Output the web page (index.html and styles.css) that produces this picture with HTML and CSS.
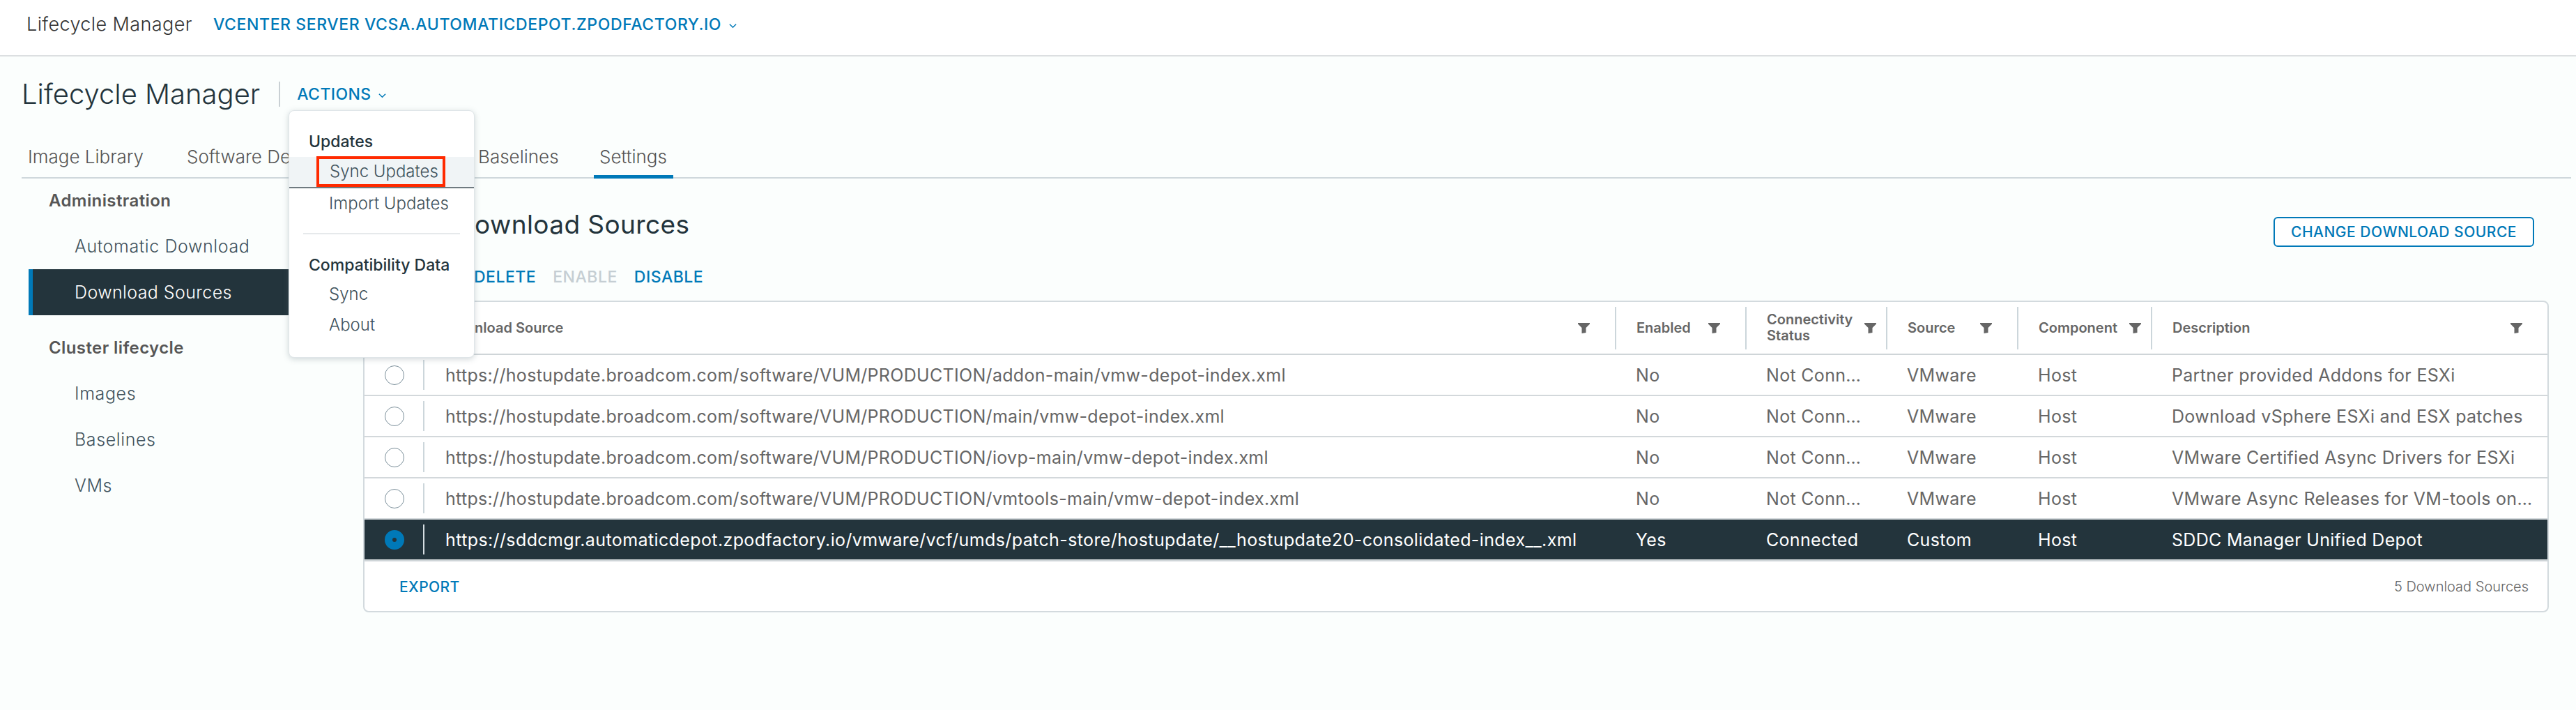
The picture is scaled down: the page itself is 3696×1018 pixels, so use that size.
FILE: index.html
```html
<!doctype html>
<html>
<head>
<meta charset="UTF-8" />
<title>Lifecycle Manager</title>
<link rel="stylesheet" href="styles.css">
</head>
<body>
	<header class="app-header">
		<span class="app-name">Lifecycle Manager</span>
		<a class="context-link">VCENTER SERVER VCSA.AUTOMATICDEPOT.ZPODFACTORY.IO
			<svg class="caret" viewBox="0 0 12 8"><path d="M1 1.5L6 6.5L11 1.5" /></svg>
		</a>
	</header>

	<div class="title-bar">
		<h1 class="page-title">Lifecycle Manager</h1>
		<a class="actions-link">ACTIONS
			<svg class="caret" viewBox="0 0 12 8"><path d="M1 1.5L6 6.5L11 1.5" /></svg>
		</a>
	</div>

	<nav class="tabs">
		<a class="tab tab-library">Image Library</a>
		<a class="tab tab-depot">Software Depot</a>
		<a class="tab tab-baselines">Baselines</a>
		<a class="tab tab-active">Settings</a>
	</nav>

	<div class="dropdown">
		<div class="dropdown-head">Updates</div>
		<div class="dropdown-item item-focus"><span class="red-box">Sync Updates</span></div>
		<div class="dropdown-item">Import Updates</div>
		<div class="dropdown-divider"></div>
		<div class="dropdown-head">Compatibility Data</div>
		<div class="dropdown-item">Sync</div>
		<div class="dropdown-item">About</div>
	</div>

	<div class="content">
		<aside class="sidebar">
			<div class="side-title">Administration</div>
			<a class="side-link">Automatic Download</a>
			<a class="side-link side-active">Download Sources</a>
			<div class="side-title side-title-2">Cluster lifecycle</div>
			<a class="side-link">Images</a>
			<a class="side-link">Baselines</a>
			<a class="side-link">VMs</a>
		</aside>

		<main class="main">
			<div class="main-head">
				<h2 class="main-title">Download Sources</h2>
				<button class="outline-btn">CHANGE DOWNLOAD SOURCE</button>
			</div>
			<div class="grid-actions">
				<a class="grid-action">DELETE</a>
				<a class="grid-action action-off">ENABLE</a>
				<a class="grid-action">DISABLE</a>
			</div>

			<div class="datagrid">
				<table class="grid-table">
					<colgroup>
						<col class="col-radio"><col class="col-url"><col class="col-enabled"><col class="col-conn"><col class="col-source"><col class="col-comp"><col>
					</colgroup>
					<thead>
						<tr>
							<th></th>
							<th><div class="th-box th-first"><span>Download Source</span><svg class="funnel" viewBox="0 0 17 15"><path d="M0 0H17V1.500L11.500 7V14L5.500 15V7L0 1.500Z" /></svg></div></th>
							<th><div class="th-box"><span>Enabled</span><svg class="funnel" viewBox="0 0 17 15"><path d="M0 0H17V1.500L11.500 7V14L5.500 15V7L0 1.500Z" /></svg></div></th>
							<th><div class="th-box th-tight"><span>Connectivity<br>Status</span><svg class="funnel" viewBox="0 0 17 15"><path d="M0 0H17V1.500L11.500 7V14L5.500 15V7L0 1.500Z" /></svg></div></th>
							<th><div class="th-box"><span>Source</span><svg class="funnel" viewBox="0 0 17 15"><path d="M0 0H17V1.500L11.500 7V14L5.500 15V7L0 1.500Z" /></svg></div></th>
							<th><div class="th-box th-tight"><span>Component</span><svg class="funnel" viewBox="0 0 17 15"><path d="M0 0H17V1.500L11.500 7V14L5.500 15V7L0 1.500Z" /></svg></div></th>
							<th><div class="th-box"><span>Description</span><svg class="funnel" viewBox="0 0 17 15"><path d="M0 0H17V1.500L11.500 7V14L5.500 15V7L0 1.500Z" /></svg></div></th>
						</tr>
					</thead>
					<tbody>
						<tr>
							<td class="radio-cell"><div class="radio-box"><i class="radio"></i></div></td>
							<td>https://hostupdate.broadcom.com/software/VUM/PRODUCTION/addon-main/vmw-depot-index.xml</td>
							<td>No</td><td>Not Conn…</td><td>VMware</td><td>Host</td><td>Partner provided Addons for ESXi</td>
						</tr>
						<tr>
							<td class="radio-cell"><div class="radio-box"><i class="radio"></i></div></td>
							<td>https://hostupdate.broadcom.com/software/VUM/PRODUCTION/main/vmw-depot-index.xml</td>
							<td>No</td><td>Not Conn…</td><td>VMware</td><td>Host</td><td>Download vSphere ESXi and ESX patches</td>
						</tr>
						<tr>
							<td class="radio-cell"><div class="radio-box"><i class="radio"></i></div></td>
							<td>https://hostupdate.broadcom.com/software/VUM/PRODUCTION/iovp-main/vmw-depot-index.xml</td>
							<td>No</td><td>Not Conn…</td><td>VMware</td><td>Host</td><td>VMware Certified Async Drivers for ESXi</td>
						</tr>
						<tr>
							<td class="radio-cell"><div class="radio-box"><i class="radio"></i></div></td>
							<td>https://hostupdate.broadcom.com/software/VUM/PRODUCTION/vmtools-main/vmw-depot-index.xml</td>
							<td>No</td><td>Not Conn…</td><td>VMware</td><td>Host</td><td>VMware Async Releases for VM-tools on…</td>
						</tr>
						<tr class="row-selected">
							<td class="radio-cell"><div class="radio-box"><i class="radio radio-on"></i></div></td>
							<td class="url-long">https://sddcmgr.automaticdepot.zpodfactory.io/vmware/vcf/umds/patch-store/hostupdate/__hostupdate20-consolidated-index__.xml</td>
							<td>Yes</td><td>Connected</td><td>Custom</td><td>Host</td><td>SDDC Manager Unified Depot</td>
						</tr>
					</tbody>
				</table>
				<div class="grid-footer">
					<a class="export-link">EXPORT</a>
					<span class="grid-count">5 Download Sources</span>
				</div>
			</div>
		</main>
	</div>
</body>
</html>
```

FILE: styles.css
```css
html, body, h1, h2, div, table, tr, td, th, a, button{
	margin:0;
	padding:0;
}
body{
	width:3696px;
	height:1018px;
	overflow:hidden;
	position:relative;
	background-color:#fbfefd;
	font-family:"Inter", "Open Sans", sans-serif;
	font-weight:350;
	font-size:25px;
	letter-spacing:.4px;
	color:#3f525c;
}
.caret{
	width:11px;
	height:8px;
	margin-left:4px;
	vertical-align:2px;
	fill:none;
	stroke:#0079b8;
	stroke-width:1.6;
}

/* top bar */
.app-header{
	height:81px;
	display:flex;
	align-items:center;
	padding-left:38px;
	padding-bottom:10px;
	box-sizing:border-box;
	border-bottom:2px solid #dcdfe1;
	background-color:#fff;
}
.app-name{
	width:268px;
	font-size:27px;
	font-weight:300;
	color:#333;
}
.context-link{
	font-size:23px;
	font-weight:500;
	letter-spacing:.6px;
	color:#0079b8;
}

/* title */
.title-bar{
	height:108px;
	display:flex;
	align-items:center;
	padding-left:31px;
	box-sizing:border-box;
	padding-top:0;
}
.page-title{
	font-size:40px;
	font-weight:300;
	letter-spacing:0;
	color:#23343c;
	padding-right:27px;
	border-right:2px solid #c9d0d4;
	line-height:36px;
}
.actions-link{
	margin-left:24px;
	font-size:23px;
	font-weight:500;
	color:#0079b8;
}

/* tabs */
.tabs{
	height:67px;
	margin-left:31px;
	margin-right:7px;
	border-bottom:2px solid #cfd8dc;
	box-sizing:border-box;
	display:flex;
	font-size:26px;
	letter-spacing:0;
	color:#565656;
}
.tab{
	padding:20px 8px 0;
	margin-bottom:-2px;
	box-sizing:border-box;
}
.tab-library{
	margin-left:1px;
	width:228px;
}
.tab-depot{
	width:418px;
}
.tab-baselines{
	width:174px;
}
.tab-active{
	width:114px;
	border-bottom:5px solid #0079b8;
}

/* actions menu */
.dropdown{
	position:absolute;
	left:414px;
	top:158px;
	width:267px;
	height:355px;
	padding-top:24px;
	box-sizing:border-box;
	background-color:#fff;
	border:1px solid #dfe5e8;
	border-radius:8px;
	box-shadow:0 2px 8px rgba(90,110,120,.28);
	font-size:24px;
	letter-spacing:0;
	color:#3f525c;
	z-index:5;
}
.dropdown-head{
	height:40px;
	line-height:40px;
	padding-left:28px;
	font-weight:500;
	color:#23343c;
	font-size:23px;
}
.dropdown-item{
	height:44px;
	line-height:44px;
	padding-left:57px;
}
.item-focus{
	position:relative;
	background-color:#f0f4f6;
	border-bottom:2px solid #6f7a80;
	box-sizing:border-box;
	height:45px;
	margin-top:2px;
}
.red-box{
	position:absolute;
	left:39px;
	top:-1px;
	width:185px;
	height:44px;
	padding-left:15px;
	box-sizing:border-box;
	border:4px solid #ff2a00;
	line-height:36px;
	white-space:nowrap;
}
.dropdown-divider{
	height:2px;
	margin:20px 20px 24px;
	background-color:#e6e9eb;
}

/* layout */
.content{
	display:flex;
}
.sidebar{
	width:521px;
	flex:none;
	box-sizing:border-box;
	padding-left:41px;
}
.side-title{
	height:64px;
	line-height:64px;
	padding-left:29px;
	font-weight:600;
	font-size:24px;
	color:#565656;
}
.side-title-2{
	margin-top:15px;
}
.side-link{
	display:block;
	height:66px;
	line-height:66px;
	padding-left:66px;
	letter-spacing:.6px;
	color:#3f525c;
}
.side-active{
	width:460px;
	box-sizing:border-box;
	padding-left:60px;
	border-left:6px solid #0079b8;
	background-color:#23343c;
	letter-spacing:.4px;
	color:#fff;
}

/* main */
.main{
	flex:1;
	margin-right:39px;
}
.main-head{
	height:113px;
	display:flex;
	justify-content:space-between;
	align-items:flex-start;
}
.main-title{
	margin:44px 0 0 133px;
	font-size:37px;
	line-height:44px;
	font-weight:400;
	color:#23343c;
}
.outline-btn{
	margin:55px 21px 0 0;
	width:374px;
	height:43px;
	background-color:#fff;
	border:2px solid #0079b8;
	border-radius:6px;
	font-family:"Inter", "Open Sans", sans-serif;
	font-size:21px;
	letter-spacing:.5px;
	font-weight:500;
	color:#0079b8;
}
.grid-actions{
	height:62px;
	display:flex;
	gap:24px;
	padding-left:159px;
	font-size:23px;
	font-weight:500;
	letter-spacing:.5px;
	color:#0079b8;
}
.grid-action{
	line-height:56px;
}
.action-off{
	color:#c5ced3;
}

/* datagrid */
.datagrid{
	background-color:#fff;
	border:2px solid #d3dade;
	border-radius:8px;
	height:447px;
	box-sizing:border-box;
}
.grid-table{
	width:100%;
	table-layout:fixed;
	border-collapse:collapse;
}
.col-radio{
	width:86px;
}
.col-url{
	width:1708px;
}
.col-enabled{
	width:187px;
}
.col-conn{
	width:202px;
}
.col-source{
	width:188px;
}
.col-comp{
	width:192px;
}
.grid-table th{
	height:74px;
	padding:0;
	border-bottom:2px solid #cfd5d8;
	text-align:left;
	font-size:20px;
	font-weight:600;
	letter-spacing:0;
	color:#666;
}
.th-box{
	height:61px;
	display:flex;
	align-items:center;
	justify-content:space-between;
	border-left:2px solid #ccd6db;
	padding:0 36px 0 29px;
	line-height:23px;
}
.th-first{
	border-left:0;
}
.th-tight{
	padding-right:14px;
}
.funnel{
	width:17px;
	height:15px;
	flex:none;
	fill:#666;
}
.grid-table td{
	height:57px;
	padding:0 0 0 30px;
	border-bottom:2px solid #d3d8db;
	font-size:25px;
	font-weight:400;
	letter-spacing:.31px;
	color:#666;
	white-space:nowrap;
	overflow:hidden;
}
.grid-table td.radio-cell{
	padding:0;
}
.radio-box{
	height:43px;
	display:flex;
	align-items:center;
	padding-left:29px;
	border-right:2px solid #ccd6db;
}
.radio{
	width:28px;
	height:28px;
	box-sizing:border-box;
	border:1.5px solid #7a8e99;
	border-radius:50%;
	background-color:#fff;
}
.radio-on{
	border:11px solid #0079b8;
	background-color:#23343c;
}
.row-selected td{
	background-color:#23343c;
	color:#fff;
	border-bottom:3px solid #cfd5d8;
}
.row-selected td.url-long{
	letter-spacing:.39px;
}
.row-selected .radio-box{
	border-right-color:#d5dde1;
}
.grid-footer{
	height:70px;
	display:flex;
	align-items:center;
	justify-content:space-between;
	padding:2px 27px 0 50px;
	box-sizing:border-box;
}
.export-link{
	font-size:21px;
	font-weight:500;
	color:#0079b8;
}
.grid-count{
	font-size:20px;
	color:#666;
	letter-spacing:0;
}
```
